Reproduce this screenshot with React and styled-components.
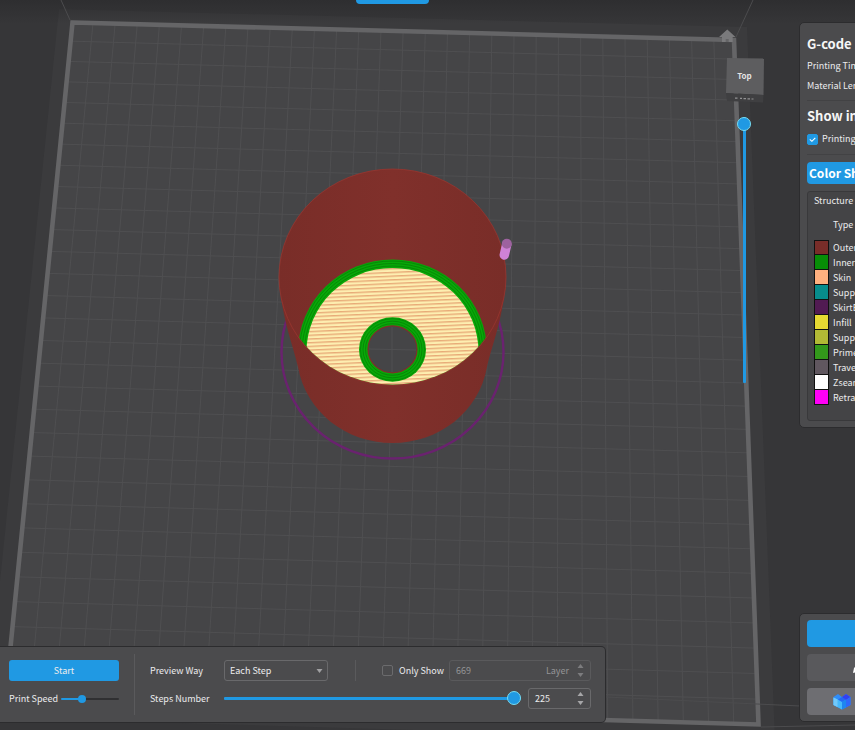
import React, { useState } from "react";
import styled, { createGlobalStyle } from "styled-components";

const BLUE = "#2099e3";
const RIM = "#76dcf2";

const Global = createGlobalStyle`
  * { box-sizing: border-box; }
  body { margin: 0; background: #fff; overflow: hidden; }
  button, input, select { font: inherit; color: inherit; margin: 0; }
`;

const Stage = styled.main`
  display: grid;
  height: calc(100vh - 20px);
  overflow: hidden;
  background: #363638;
  color: #ececed;
  font: 9px/12px "Noto Sans CJK SC", "Noto Sans", sans-serif;
`;

const Canvas = styled.svg`
  grid-area: 1 / 1;
  width: 100%;
  height: 100%;
  min-height: 0;
`;

const Overlay = styled.div`
  grid-area: 1 / 1;
  z-index: 1;
  display: flex;
  min-width: 0;
  min-height: 0;
`;

const Main = styled.div`
  flex: 1;
  min-width: 0;
  display: flex;
  flex-direction: column;
  justify-content: space-between;
  padding-bottom: 7px;
`;

const TabRow = styled.div`
  display: flex;
  justify-content: center;
  padding-left: 48px;
`;

const Tab = styled.button`
  width: 73px;
  height: 4px;
  padding: 0;
  border: 0;
  border-radius: 0 0 4px 4px;
  background: ${BLUE};
`;

const LayerColumn = styled.div`
  width: 16px;
  margin-right: 46px;
  padding-top: 117px;
`;

const Side = styled.aside`
  width: 56px;
  display: flex;
  flex-direction: column;
  justify-content: space-between;
  padding: 22px 0 8px;
`;

const Panel = styled.section`
  width: 240px;
  padding: ${(p) => (p.$actions ? "6px 7px" : "13px 7px 6px")};
  border: 1px solid #2c2c2e;
  border-radius: 5px;
  background: #4b4b4d;
  white-space: nowrap;
  ${(p) => p.$actions && "display: grid; gap: 7px;"}
`;

const Title = styled.h2`
  margin: 0 0 ${(p) => p.$gap}px;
  font-size: 13px;
  line-height: 16px;
  font-weight: 700;
  color: #f6f6f6;
`;

const Fact = styled.p`
  margin: 0;
  line-height: 20px;
`;

const Group = styled.div`
  padding-bottom: ${(p) => p.$gap}px;
  margin-bottom: 7px;
  border-bottom: 1px solid #424244;
`;

const Check = styled.label`
  display: flex;
  align-items: center;
  gap: ${(p) => p.$gap || 4}px;
  line-height: 14px;
`;

const Tick = styled.input.attrs({ type: "checkbox" })`
  appearance: none;
  flex: none;
  width: 11px;
  height: 11px;
  border: 1px solid #6b6b6d;
  border-radius: 2px;
  &:checked {
    border-color: ${BLUE};
    background: ${BLUE} url("data:image/svg+xml,%3Csvg xmlns='http://www.w3.org/2000/svg' viewBox='0 0 9 9'%3E%3Cpath d='M1.8 4.4 3.9 6.3 7.3 2.9' fill='none' stroke='white' stroke-width='1.1'/%3E%3C/svg%3E") center / 9px 9px no-repeat;
  }
`;

const SchemeButton = styled.button`
  display: block;
  width: 100%;
  height: 22px;
  padding: 0 2px;
  border: 0;
  border-radius: 4px;
  background: ${BLUE};
  color: #fff;
  font-size: 12px;
  font-weight: 700;
  line-height: 20px;
  text-align: left;
`;

const Legend = styled.div`
  margin-top: 7px;
  padding: 1px 6px 15px;
  border: 1px solid #39393b;
  border-radius: 3px;
  background: #444446;
`;

const LegendTable = styled.table`
  width: 100%;
  height: 196px;
  border-spacing: 0;
  caption {
    text-align: left;
    line-height: 16px;
  }
  th {
    height: 31px;
    padding: 0 4px;
    font-weight: 400;
    text-align: left;
  }
  td {
    padding: 0 4px;
    line-height: 13px;
  }
`;

const Swatch = styled.td`
  width: 15px;
  border: 1px solid #111;
  border-top-width: ${(p) => (p.$first ? 1 : 0)}px;
  background: ${(p) => p.$color};
`;

const ActionButton = styled.button`
  display: flex;
  align-items: center;
  height: 27px;
  padding: 0 ${(p) => p.$inset || 0}px;
  border: 0;
  border-radius: 4px;
  background: ${(p) => p.$color};
`;

const Bar = styled.section`
  display: flex;
  width: 100%;
  max-width: 606px;
  padding: 7px 14px 7px 9px;
  border: 1px solid #2c2c2e;
  border-left: 0;
  border-radius: 0 5px 5px 0;
  background: #4b4b4d;
  white-space: nowrap;
`;

const Rows = styled.div`
  display: grid;
  grid-template-columns: minmax(0, 1fr);
  gap: 7px;
  padding: 6px 0;
  ${(p) => (p.$fill ? "flex: 1; min-width: 0; padding-left: 15px;" : "flex: none; width: 110px;")}
`;

const Row = styled.div`
  display: flex;
  align-items: center;
  height: 21px;
`;

const Divider = styled.span`
  width: 1px;
  margin-left: ${(p) => p.$left}px;
  margin-right: ${(p) => p.$right || 0}px;
  align-self: stretch;
  background: #5a5a5c;
`;

const StartButton = styled.button`
  width: 100%;
  height: 21px;
  padding: 0;
  border: 0;
  border-radius: 3px;
  background: ${BLUE};
`;

const FieldLabel = styled.label`
  flex: none;
  width: ${(p) => (p.$wide ? "74px" : "52px")};
`;

const Picker = styled.div`
  display: grid;
  align-items: center;
  width: 104px;
  height: 21px;
  select, svg { grid-area: 1 / 1; }
  select {
    appearance: none;
    width: 100%;
    height: 21px;
    padding: 0 5px;
    border: 1px solid #69696b;
    border-radius: 3px;
    background: transparent;
  }
  svg { justify-self: end; margin-right: 5px; pointer-events: none; }
`;

const NumberBox = styled.div`
  display: flex;
  align-items: center;
  flex: ${(p) => (p.$fill ? "0 0 142px" : "0 0 63px")};
  min-width: 0;
  height: 21px;
  margin-left: ${(p) => (p.$fill ? "auto" : "7px")};
  padding: 0 6px;
  border: 1px solid ${(p) => (p.$off ? "#5a5a5c" : "#69696b")};
  border-radius: 3px;
  color: ${(p) => (p.$off ? "#949496" : "#ececed")};
  input {
    flex: 1;
    min-width: 0;
    width: 0;
    padding: 0;
    border: 0;
    outline: 0;
    background: transparent;
  }
`;

const Steppers = styled.span`
  display: grid;
  gap: 5px;
  margin-left: 8px;
  color: ${(p) => (p.$off ? "#7c7c7e" : "#a6a6a8")};
  button {
    display: block;
    width: 7px;
    height: 4px;
    padding: 0;
    border: 0;
    background: none;
  }
  svg { display: block; }
`;

const Slider = styled.input.attrs({ type: "range" })`
  appearance: none;
  background: transparent;
  ${(p) =>
    p.$vertical
      ? "display: block; writing-mode: vertical-lr; width: 15px; height: 266px;"
      : "flex: 1; min-width: 0; height: 15px;"}
  &::-webkit-slider-runnable-track {
    ${(p) => (p.$vertical ? "width: 3px; height: 100%;" : p.$small ? "height: 2px;" : "height: 3px;")}
    border-radius: 1px;
    background: ${(p) =>
      p.$small ? `linear-gradient(90deg, ${BLUE} 35%, #303032 35%)` : BLUE};
  }
  &::-webkit-slider-thumb {
    appearance: none;
    width: ${(p) => (p.$small ? 8 : 14)}px;
    height: ${(p) => (p.$small ? 8 : 14)}px;
    ${(p) =>
      p.$vertical ? "margin-left: -6px;" : p.$small ? "margin-top: -3px;" : "margin-top: -6px;"}
    border: ${(p) => (p.$small ? "0" : `1px solid ${RIM}`)};
    border-radius: 50%;
    background: ${BLUE};
  }
`;

/* Projective mapping of the unit square onto the four corners of the bed. */
const BED = [[71, 21], [736, 39], [759, 725], [4, 703]];
function projector([[x0, y0], [x1, y1], [x2, y2], [x3, y3]]) {
  const dx1 = x1 - x2, dx2 = x3 - x2, dx3 = x0 - x1 + x2 - x3;
  const dy1 = y1 - y2, dy2 = y3 - y2, dy3 = y0 - y1 + y2 - y3;
  const den = dx1 * dy2 - dx2 * dy1;
  const g = (dx3 * dy2 - dx2 * dy3) / den;
  const h = (dx1 * dy3 - dx3 * dy1) / den;
  return (u, v) => {
    const w = g * u + h * v + 1;
    return [
      ((x1 - x0 + g * x1) * u + (x3 - x0 + h * x3) * v + x0) / w,
      ((y1 - y0 + g * y1) * u + (y3 - y0 + h * y3) * v + y0) / w,
    ];
  };
}
const project = projector(BED);
const gridPath = Array.from({ length: 29 }, (_, i) => {
  const t = (i + 1) / 30;
  return `M${project(t, 0)}L${project(t, 1)}M${project(0, t)}L${project(1, t)}`;
}).join("");

function Scene() {
  return (
    <Canvas viewBox="0 0 855 730" preserveAspectRatio="xMidYMid slice" role="img" aria-label="Print preview">
      <defs>
        <linearGradient id="sky" x1="0" y1="0" x2="0" y2="1">
          <stop offset="0" stopColor="#2c2c2e" stopOpacity="0.8" />
          <stop offset="1" stopColor="#2c2c2e" stopOpacity="0" />
        </linearGradient>
        <linearGradient id="wall" x1="0" x2="1" y1="0" y2="0">
          <stop offset="0" stopColor="#792d28" />
          <stop offset="0.5" stopColor="#80302b" />
          <stop offset="1" stopColor="#792d28" />
        </linearGradient>
        <pattern id="infill" width="200" height="3.7" patternUnits="userSpaceOnUse" patternTransform="rotate(-2.5)">
          <rect width="200" height="3.7" fill="#fdeeb0" />
          <rect width="200" height="1.4" fill="#e8ab78" />
        </pattern>
        <clipPath id="rim">
          <ellipse cx="392.5" cy="277" rx="113" ry="107.5" />
        </clipPath>
      </defs>
      <rect width="855" height="730" fill="#363638" />
      <polygon points="59,9 747,27 775,741 -14,717" fill="#3b3b3d" />
      <rect width="855" height="24" fill="url(#sky)" />
      <polygon points="71,21 736,39 759,725 4,703" fill="#454547" />
      <path d={gridPath} stroke="#4f4f51" strokeWidth="1" fill="none" />
      <polygon points="72.5,22.5 734,40 758.5,724.5 5,702.5" fill="none" stroke="#656567" strokeWidth="4.6" />
      <path d="M61 0 70 20M753 0 736 37M606 697 800 706M761 727 855 725" stroke="#4c4c4e" fill="none" />

      <ellipse cx="392.5" cy="352" rx="111" ry="106.5" fill="none" stroke="#6a226f" strokeWidth="2.4" />
      <path
        d="M281 298 C286 330 293 345 298 367 C306 412 346 443 392.5 443 C439 443 479 412 487 367 C492 345 499 330 504 298Z"
        fill="url(#wall)"
      />
      <ellipse cx="392.5" cy="277" rx="113.5" ry="108" fill="url(#wall)" stroke="#99352f" strokeWidth="0.8" />
      <g clipPath="url(#rim)">
        <ellipse cx="392.5" cy="352" rx="94.5" ry="92.5" fill="#08a808" />
        {[93, 90.5, 88].map((r) => (
          <ellipse key={r} cx="392.5" cy="352" rx={r} ry={r - 2} fill="none" stroke="#068006" strokeWidth="0.8" />
        ))}
        <ellipse cx="392.5" cy="352" rx="86" ry="84" fill="url(#infill)" />
      </g>
      <ellipse cx="392.5" cy="349.5" rx="33.5" ry="32.2" fill="#08a808" />
      {[32, 29.5, 27].map((r) => (
        <ellipse key={r} cx="392.5" cy="349.5" rx={r} ry={r - 1.2} fill="none" stroke="#068006" strokeWidth="0.8" />
      ))}
      <ellipse cx="392.5" cy="349.3" rx="24.5" ry="23.5" fill="#454547" stroke="#7d302a" strokeWidth="1.2" />
      <path d="M392 327V372M369 349 416 350" stroke="#505052" />
      <path d="M506.7 244.5 504.3 255" stroke="#cf82d6" strokeWidth="9.5" strokeLinecap="round" />
      <circle cx="506.8" cy="243.7" r="5" fill="#9d629f" />

      <path d="M727.3 29.5 735.5 37H732.7V42H728.7V39H725.7V42H722V37H719Z" fill="#7a7a7c" />
      <polygon points="727,58 764,58.5 763.5,95 726,93" fill="#5d5d5f" />
      <polygon points="726,93 763.5,95 763,102.5 727,101" fill="#3f3f41" />
      <path d="M735 98.2H737.5M740 98.4H742M743.5 98.6H746M747.5 98.8H750M751.5 99H753.5" stroke="#929294" strokeWidth="1.2" />
      <text x="744.5" y="79" textAnchor="middle" fill="#e4e4e4" fontSize="8" fontWeight="700">Top</text>
    </Canvas>
  );
}

const Triangle = ({ up, muted }) => (
  <svg width="7" height="4" viewBox="0 0 7 4" aria-hidden="true">
    <path d={up ? "M.5 4 3.5 0 6.5 4Z" : "M.5 0 3.5 4 6.5 0Z"} fill={muted ? "#a0a0a2" : "currentColor"} />
  </svg>
);

function Stepper({ off, onStep }) {
  return (
    <Steppers $off={off}>
      <button disabled={off} aria-label="Increase" onClick={() => onStep(1)}><Triangle up /></button>
      <button disabled={off} aria-label="Decrease" onClick={() => onStep(-1)}><Triangle /></button>
    </Steppers>
  );
}

const TYPES = [
  ["Outer Wall", "#792d29"],
  ["Inner Wall", "#078e07"],
  ["Skin", "#ffb07f"],
  ["Support", "#078c8c"],
  ["SkirtBrim", "#511b52"],
  ["Infill", "#e6d932"],
  ["SupportInfill", "#b2b935"],
  ["PrimeTower", "#33981b"],
  ["Travel", "#60575f"],
  ["Zseam", "#ffffff"],
  ["Retract", "#ff00f6"],
];

export default function App() {
  const [step, setStep] = useState(225);
  const [only, setOnly] = useState(false);
  return (
    <>
      <Global />
      <Stage>
        <Scene />
        <Overlay>
          <Main>
            <TabRow><Tab aria-label="Preview" /></TabRow>
            <Bar>
              <Rows>
                <Row><StartButton>Start</StartButton></Row>
                <Row>
                  <FieldLabel htmlFor="speed">Print Speed</FieldLabel>
                  <Slider id="speed" $small defaultValue={33} />
                </Row>
              </Rows>
              <Divider $left={15} />
              <Rows $fill>
                <Row>
                  <FieldLabel $wide htmlFor="way">Preview Way</FieldLabel>
                  <Picker>
                    <select id="way"><option>Each Step</option></select>
                    <Triangle muted />
                  </Picker>
                  <Divider $left={27} $right={26} />
                  <Check $gap={6}>
                    <Tick checked={only} onChange={() => setOnly(!only)} />
                    Only Show
                  </Check>
                  <NumberBox $fill $off>
                    <input aria-label="Layer" defaultValue="669" disabled />
                    Layer
                    <Stepper off />
                  </NumberBox>
                </Row>
                <Row>
                  <FieldLabel $wide htmlFor="steps">Steps Number</FieldLabel>
                  <Slider id="steps" min={1} max={225} value={step} onChange={(e) => setStep(+e.target.value)} />
                  <NumberBox>
                    <input aria-label="Step" value={step} onChange={(e) => setStep(+e.target.value || 1)} />
                    <Stepper onStep={(d) => setStep(Math.min(225, Math.max(1, step + d)))} />
                  </NumberBox>
                </Row>
              </Rows>
            </Bar>
          </Main>
          <LayerColumn>
            <Slider $vertical aria-label="Layer height" defaultValue={0} />
          </LayerColumn>
          <Side>
            <Panel>
              <Group $gap={4}>
                <Title $gap={4}>G-code Preview</Title>
                <Fact>Printing Time</Fact>
                <Fact>Material Length</Fact>
              </Group>
              <Group $gap={8}>
                <Title $gap={8}>Show in Preview</Title>
                <Check><Tick defaultChecked />Printing Head</Check>
              </Group>
              <SchemeButton>Color Show</SchemeButton>
              <Legend>
                <LegendTable>
                  <caption>Structure</caption>
                  <thead><tr><th aria-label="Color" /><th>Type</th></tr></thead>
                  <tbody>
                    {TYPES.map(([name, color], i) => (
                      <tr key={name}><Swatch $color={color} $first={i === 0} /><td>{name}</td></tr>
                    ))}
                  </tbody>
                </LegendTable>
              </Legend>
            </Panel>
            <Panel $actions>
              <ActionButton $color={BLUE} aria-label="Slice" />
              <ActionButton $color="#59595c" $inset={45} aria-label="Edit">
                <svg width="14" height="14" viewBox="0 0 14 14" aria-hidden="true">
                  <path d="M1 12 2 7 9 0 13 4 6 11Z" fill="#fff" />
                </svg>
              </ActionButton>
              <ActionButton $color="#6e6e72" $inset={26} aria-label="Cloud">
                <svg width="18" height="17" viewBox="0 0 18 17" aria-hidden="true">
                  <path d="M.5 4 5 1 9 4 13 1 17.5 4V12L9 16.5 .5 12Z" fill="#2f8cf8" />
                  <path d="M.5 4.5 9 8.5V16.5L.5 12Z" fill="#46b8fb" />
                  <path d="M.5 4.5 4.5 6.5V14L.5 12Z" fill="#72c9fb" />
                  <path d="M5 6.5 9 4 13 6.5 9 9Z" fill="#2468f5" />
                  <path d="M9 4 13 1 17.5 4 13 7Z" fill="#3340f2" />
                  <path d="M9 9 13 6.5V14.5L9 16.5Z" fill="#1e86f0" />
                  <path d="M13 7 17.5 4V12L13 14.5Z" fill="#2f67fa" />
                </svg>
              </ActionButton>
            </Panel>
          </Side>
        </Overlay>
      </Stage>
    </>
  );
}
